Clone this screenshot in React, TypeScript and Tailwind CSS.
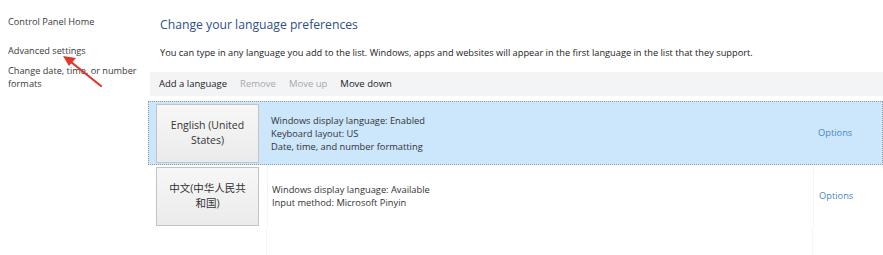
import React from 'react';

const font = { fontFamily: '"Open Sans", "Noto Sans", "Noto Sans CJK SC", sans-serif' };

type Lang = {
  name: React.ReactNode;
  lines: string[];
  selected?: boolean;
};

const langs: Lang[] = [
  {
    name: (
      <>
        English (United
        <br />
        States)
      </>
    ),
    lines: ['Windows display language: Enabled', 'Keyboard layout: US', 'Date, time, and number formatting'],
    selected: true,
  },
  {
    name: (
      <>
        中文(中华人民共
        <br />
        和国)
      </>
    ),
    lines: ['Windows display language: Available', 'Input method: Microsoft Pinyin'],
  },
];

function LangRow({ lang }: { lang: Lang }) {
  return (
    <div
      className={
        'grid grid-cols-[118px_546px_1fr] ' +
        (lang.selected ? 'h-[64px] bg-[#cce6fb] border border-dotted border-[#8d9aa8]' : 'h-[62px] border border-transparent')
      }
    >
      <div className="flex items-center pl-[7px]">
        <div className="w-[103px] h-[59px] flex items-center justify-center text-center text-[10.5px] leading-[15px] text-[#333] border border-[#c3c3c3] bg-gradient-to-b from-[#f7f7f7] to-[#ebebeb]">
          <span>{lang.name}</span>
        </div>
      </div>
      <div className={'flex flex-col justify-center pl-[4px] text-[9.3px] leading-[13px] text-[#333] ' + (lang.selected ? '' : 'border-l border-[#f4f4f4]')}>
        {lang.lines.map((l) => (
          <div key={l}>{l}</div>
        ))}
      </div>
      <div className={'flex items-center pl-[5px] text-[9.3px] text-[#4a86c5] ' + (lang.selected ? '' : 'border-l border-[#f4f4f4]')}>
        Options
      </div>
    </div>
  );
}

export default function App() {
  return (
    <div className="relative w-[883px] h-[255px] overflow-hidden bg-white flex" style={font}>
      {/* Sidebar */}
      <div className="w-[148px] shrink-0 pl-[8px] pt-[15px] text-[9.2px] leading-[13px] text-[#3a3a3a]">
        <div>Control Panel Home</div>
        <div className="mt-[16px]">Advanced settings</div>
        <div className="mt-[7px]">
          Change date, time, or number
          <br />
          formats
        </div>
      </div>

      {/* Main */}
      <div className="flex-1 flex flex-col">
        <div className="pl-[12px] pt-[16px] text-[12.2px] leading-[18px] text-[#2e4f8a]">Change your language preferences</div>
        <div className="pl-[12px] mt-[12px] text-[9.25px] leading-[14px] text-[#222]">
          You can type in any language you add to the list. Windows, apps and websites will appear in the first language in the list that they support.
        </div>
        <div className="ml-[2px] mt-[12px] h-[24px] bg-[#f3f4f6] flex items-center gap-[13px] pl-[9px] text-[9.5px] text-[#222]">
          <span>Add a language</span>
          <span className="text-[#a8a8a8]">Remove</span>
          <span className="text-[#a8a8a8]">Move up</span>
          <span>Move down</span>
        </div>
        <div className="mt-[5px] flex flex-col flex-1">
          {langs.map((l, i) => (
            <LangRow key={i} lang={l} />
          ))}
          <div className="flex-1 grid grid-cols-[118px_546px_1fr]">
            <div />
            <div className="border-l border-[#f4f4f4]" />
            <div className="border-l border-[#f4f4f4]" />
          </div>
        </div>
      </div>

      {/* Red annotation arrow */}
      <svg className="absolute left-0 top-0 pointer-events-none" width="883" height="255">
        <line x1="101" y1="86" x2="71" y2="62" stroke="#e2362b" strokeWidth="2.2" strokeLinecap="round" />
        <polygon points="63,56 76,58 69,66" fill="#e2362b" />
      </svg>
    </div>
  );
}
